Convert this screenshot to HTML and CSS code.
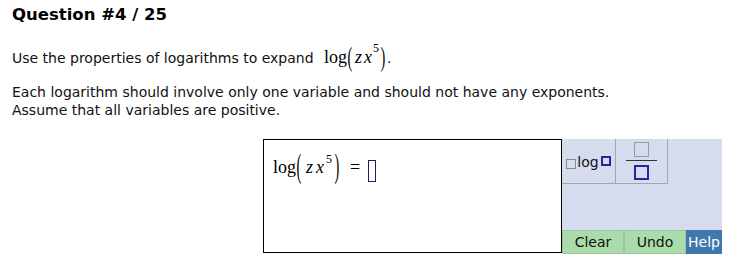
FILE: index.html
```html
<!DOCTYPE html>
<html>
<head>
<meta charset="utf-8">
<title>Question #4 / 25</title>
<link rel="stylesheet" href="styles.css">
</head>
<body>
<h1 class="title">Question #4 / 25</h1>
<p class="prompt">Use the properties of logarithms to expand <span class="m m-inline"><span class="fn">log</span><span class="paren">(</span><span class="var v-z">z</span><span class="var v-x">x</span><span class="sup">5</span><span class="paren">)</span></span>.</p>
<p class="note">Each logarithm should involve only one variable and should not have any exponents.<br>Assume that all variables are positive.</p>
<div class="widget">
  <div class="answer">
    <div class="expr m"><span class="fn">log</span><span class="paren paren-lg">(</span><span class="var v-z">z</span><span class="var v-x">x</span><span class="sup">5</span><span class="paren paren-lg">)</span><span class="eq">=</span><span class="cursor"></span></div>
  </div>
  <div class="palette">
    <div class="tools">
      <button class="tool tool-log"><span class="sq sq-gray"></span><span class="log-txt">log</span><span class="sq sq-navy"></span></button>
      <button class="tool tool-frac"><span class="fsq fsq-gray"></span><span class="fbar"></span><span class="fsq fsq-navy"></span></button>
    </div>
    <div class="actions">
      <button class="btn btn-green btn-clear">Clear</button>
      <button class="btn btn-green btn-undo">Undo</button>
      <button class="btn btn-help">Help</button>
    </div>
  </div>
</div>
</body>
</html>
```
FILE: styles.css
```css
html, body {
  background: #ffffff;
}
body {
  margin: 0;
  padding: 0 0 0 12px;
  font-family: "DejaVu Sans", Verdana, sans-serif;
  color: #111111;
}
.title {
  margin: 5px 0 0;
  font-size: 16.5px;
  line-height: 20px;
  font-weight: bold;
  color: #000000;
}
.prompt {
  margin: 18px 0 0;
  font-size: 14px;
  line-height: 30px;
  height: 30px;
}
.note {
  margin: 10px 0 0;
  font-size: 14px;
  line-height: 18px;
}
.m {
  font-family: "Liberation Serif", "Times New Roman", serif;
  font-size: 18px;
  line-height: 1;
  color: #000000;
}
.m-inline {
  margin-left: 6px;
  margin-right: 1px;
}
.paren {
  display: inline-block;
  transform: scale(0.8, 1.55);
  transform-origin: 50% 58%;
}
.paren-lg {
  transform: scale(0.8, 1.9);
  transform-origin: 50% 55%;
}
.var {
  font-style: italic;
}
.v-z {
  margin-left: 2px;
}
.v-x {
  margin-left: 2px;
}
.sup {
  font-size: 12px;
  vertical-align: 11px;
  line-height: 0;
  margin-left: 1px;
  margin-right: 1px;
}
.widget {
  display: flex;
  align-items: flex-start;
  margin: 20px 0 0 251px;
}
.answer {
  box-sizing: border-box;
  width: 299px;
  height: 114px;
  border: 1px solid #000000;
}
.expr {
  margin: 7px 0 0 9px;
  line-height: 40px;
  white-space: nowrap;
}
.expr .v-z {
  margin-left: 4px;
}
.expr .v-x {
  margin-left: 3px;
}
.expr .sup {
  vertical-align: 10px;
  margin-left: 2px;
  margin-right: 2px;
}
.eq {
  margin: 0 8px 0 10px;
}
.cursor {
  display: inline-block;
  box-sizing: border-box;
  width: 8px;
  height: 22px;
  border: 1px solid #1c1c6a;
  vertical-align: -9px;
}
.palette {
  width: 160px;
  height: 115px;
  background: #d4dcee;
  display: flex;
  flex-direction: column;
  justify-content: space-between;
}
.tools {
  display: flex;
}
button {
  font: inherit;
  margin: 0;
  padding: 0;
  border: none;
  background: none;
  cursor: pointer;
}
.tool {
  box-sizing: border-box;
  height: 45px;
  border-right: 1px solid #a4a6ab;
  border-bottom: 1px solid #a4a6ab;
  display: flex;
  align-items: center;
  justify-content: center;
}
.tool-log {
  width: 54px;
  padding-top: 1px;
}
.sq {
  display: inline-block;
  box-sizing: border-box;
  width: 10px;
  height: 10px;
}
.sq-gray {
  border: 1px solid #8c8c8c;
  margin-top: 4px;
  margin-right: 1px;
}
.sq-navy {
  border: 2px solid #2626a0;
  margin-left: 2px;
  margin-bottom: 2px;
}
.log-txt {
  font-size: 14px;
  color: #111111;
}
.tool-frac {
  width: 52px;
  flex-direction: column;
}
.fsq {
  display: block;
  box-sizing: border-box;
  width: 15px;
  height: 15px;
}
.fsq-gray {
  border: 1px solid #9a9a9a;
}
.fsq-navy {
  border: 2px solid #2626a0;
}
.fbar {
  display: block;
  width: 31px;
  height: 1px;
  background: #333333;
  margin: 3px 0 4px;
}
.actions {
  display: flex;
  height: 24px;
}
.btn {
  box-sizing: border-box;
  height: 24px;
  font-size: 14px;
  line-height: 22px;
  text-align: center;
}
.btn-green {
  width: 62px;
  background: #aadbab;
  border: 1px solid #9cc79d;
  color: #111111;
}
.btn-help {
  width: 36px;
  background: #3f78ad;
  color: #ffffff;
}
```
